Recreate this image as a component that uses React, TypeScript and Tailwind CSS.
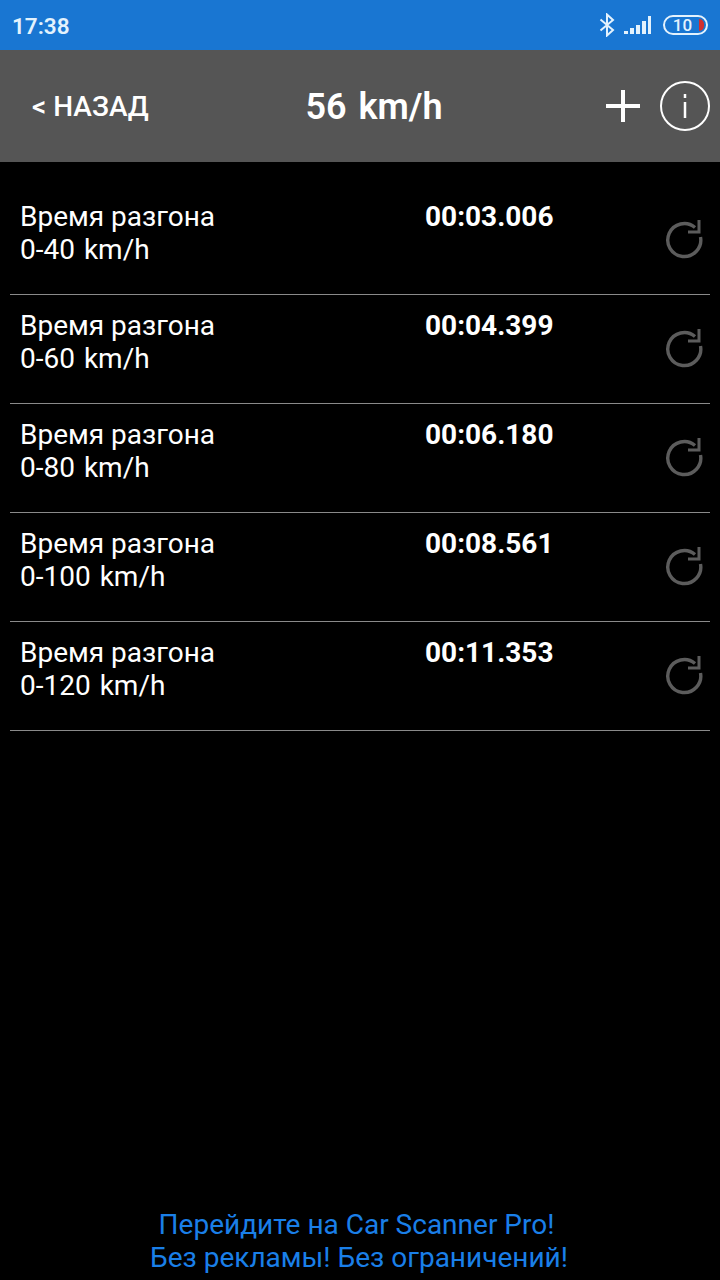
import React from "react";

const rows = [
  { range: "0-40 km/h", time: "00:03.006" },
  { range: "0-60 km/h", time: "00:04.399" },
  { range: "0-80 km/h", time: "00:06.180" },
  { range: "0-100 km/h", time: "00:08.561" },
  { range: "0-120 km/h", time: "00:11.353" },
];

const RetryIcon = () => (
  <svg width="40" height="40" viewBox="0 0 40 40" fill="none" stroke="#5c5c5c" strokeWidth="3.4">
    <path d="M36.5 18 A16.5 16.5 0 1 1 31 8.5" />
    <path d="M24 13 H35 V1" strokeWidth="3" />
  </svg>
);

const StatusBar = () => (
  <div className="h-[50px] bg-[#1976d2] flex items-center justify-between pl-[12px] pr-[12px] text-[#e3f2fd]">
    <span className="text-[22.5px] font-semibold leading-none pt-[2px]">17:38</span>
    <div className="flex items-center">
      <svg width="16" height="24" viewBox="0 0 16 24" fill="none" stroke="#e3f2fd" strokeWidth="2">
        <path d="M1.5 6.5 L14 17 L8 22.5 V1.5 L14 7 L1.5 17.5" />
      </svg>
      <svg width="28" height="20" viewBox="0 0 28 20" fill="#e3f2fd" className="ml-[9px]">
        <path d="M0 16h4v3H0z" />
        <path d="M6 13h4v6H6z" />
        <path d="M12 10h4v9h-4z" />
        <path d="M18 6h4v13h-4z" />
        <path d="M24 1h3v18h-3z" />
      </svg>
      <div className="relative ml-[11px] w-[45px] h-[20px] rounded-full border-2 border-[#e3f2fd] flex items-center justify-center pr-[6px]">
        <span className="text-[17px] font-medium leading-none">10</span>
        <span className="absolute right-[2px] top-[2px] w-[5px] h-[12px] bg-[#d32f2f] rounded-r-full" />
      </div>
    </div>
  </div>
);

const Header = () => (
  <div className="h-[112px] bg-[#555555] flex items-center text-white">
    <div className="w-[290px] pl-[32px] pt-[2px] text-[28px] font-medium leading-none">
      {"< НАЗАД"}
    </div>
    <div className="w-[168px] text-center pt-[2px] text-[36px] font-semibold leading-none whitespace-nowrap [word-spacing:3px]">
      56 km/h
    </div>
    <svg width="34" height="34" viewBox="0 0 34 34" stroke="white" strokeWidth="4" className="ml-[148px]">
      <path d="M17 1v32M0 17h34" />
    </svg>
    <div className="ml-[20px] w-[50px] h-[50px] rounded-full border-2 border-white flex items-center justify-center">
      <svg width="4" height="26" viewBox="0 0 4 26" fill="white">
        <path d="M0.75 1h2.5v4h-2.5z" />
        <path d="M0.75 9h2.5v16h-2.5z" />
      </svg>
    </div>
  </div>
);

const Row = ({ range, time }: { range: string; time: string }) => (
  <div className="mx-[10px] h-[109px] border-b border-[#8a8a8a] flex pl-[10px] text-white">
    <div className="w-[405px] pt-[14px] text-[28px] leading-[33px]">
      <div>Время разгона</div>
      <div className="[word-spacing:2px]">{range}</div>
    </div>
    <div className="w-[236px] pt-[14px] text-[28px] font-bold leading-[33px]">{time}</div>
    <div className="pt-[33px] ml-[3px]">
      <RetryIcon />
    </div>
  </div>
);

export default function App() {
  return (
    <div
      className="w-[720px] h-[1280px] bg-black flex flex-col overflow-hidden"
      style={{ fontFamily: "Roboto, sans-serif" }}
    >
      <StatusBar />
      <Header />
      <div className="pt-[24px] flex-1">
        {rows.map((r) => (
          <Row key={r.range} {...r} />
        ))}
      </div>
      <div className="h-[72px] text-center text-[28px] leading-[33px] text-[#1a7fe8]">
        <div className="pr-[7px]">Перейдите на Car Scanner Pro!</div>
        <div className="pr-[2px]">Без рекламы! Без ограничений!</div>
      </div>
    </div>
  );
}
